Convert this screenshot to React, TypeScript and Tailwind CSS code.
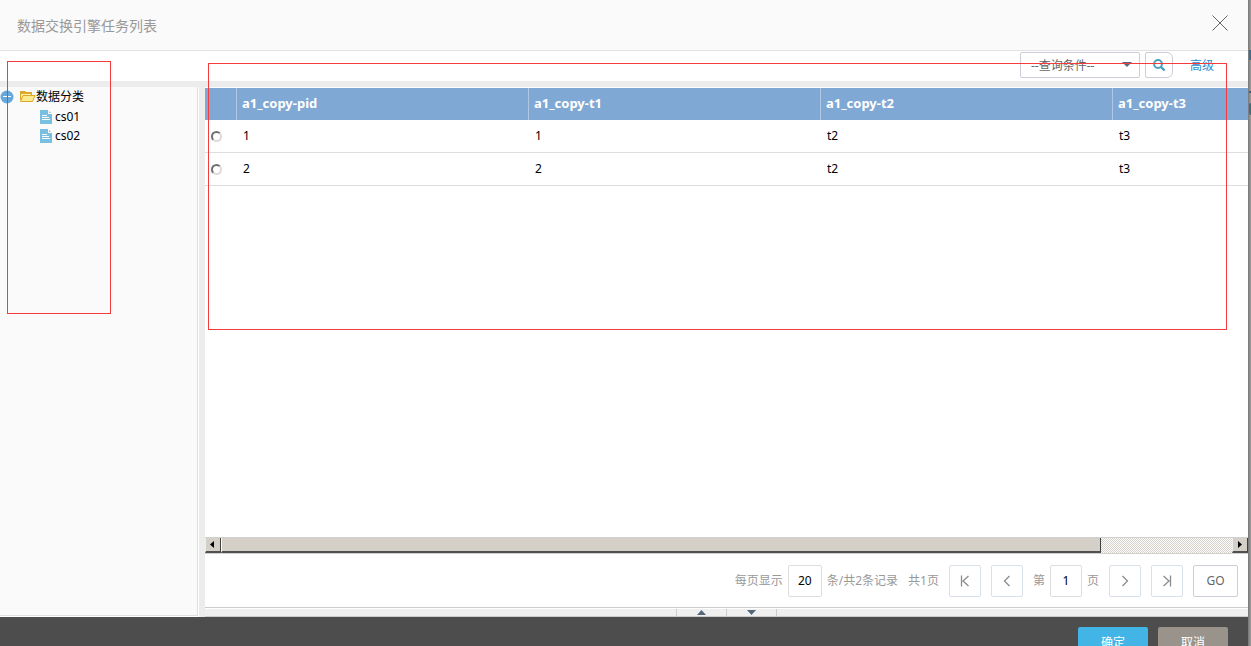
import { useState } from "react";
import type { ReactNode } from "react";

type Task = { pid: string; t1: string; t2: string; t3: string };

const columns: { key: keyof Task; label: string }[] = [
  { key: "pid", label: "a1_copy-pid" },
  { key: "t1", label: "a1_copy-t1" },
  { key: "t2", label: "a1_copy-t2" },
  { key: "t3", label: "a1_copy-t3" },
];

const tasks: Task[] = [
  { pid: "1", t1: "1", t2: "t2", t3: "t3" },
  { pid: "2", t1: "2", t2: "t2", t3: "t3" },
];

function FolderIcon() {
  return (
    <svg width="16" height="12" viewBox="0 0 16 12" className="shrink-0" aria-hidden="true">
      <path d="M0 0h5l1 1h6v3H3L1 9H0z" fill="#dba928" />
      <path d="M1 3h10v1H3L1 8z" fill="#fdf0b0" />
      <path d="M0.500 10.500L3 4.500h12L12.500 10.500z" fill="#fde98f" stroke="#dba928" />
    </svg>
  );
}

function FileIcon() {
  return (
    <svg width="12" height="14" viewBox="0 0 12 14" className="shrink-0" aria-hidden="true">
      <path d="M0 0h8v4h4v10H0z" fill="#78c0e0" />
      <path d="M9 1l2 2H9z" fill="#78c0e0" />
      <path d="M2 5.500h5M2 7.500h7M2 9.500h8" stroke="#fff" />
    </svg>
  );
}

function PageButton({ label, children }: { label: string; children: ReactNode }) {
  return (
    <button
      type="button"
      aria-label={label}
      className="w-8 h-8 flex items-center justify-center rounded-xs border border-[#d8e0ea] bg-white"
    >
      <svg width="12" height="12" viewBox="0 0 12 12" fill="none" stroke="#8c8c8c" strokeWidth="1.3" aria-hidden="true">
        {children}
      </svg>
    </button>
  );
}

export default function App() {
  const [selected, setSelected] = useState<string | null>(null);
  const [pageSize, setPageSize] = useState("20");
  const [page, setPage] = useState("1");

  return (
    <div className="relative flex h-screen overflow-hidden bg-[#999] text-xs text-black font-['Noto_Sans','Noto_Sans_CJK_SC',sans-serif]">
      {/* Dialog */}
      <div className="flex-1 min-w-0 flex flex-col bg-white">
        <header className="h-[51px] shrink-0 flex items-center justify-between pl-[17px] pr-5 border-b border-[#e2e2e2] bg-[#fafafa]">
          <h1 className="pt-[2px] text-sm text-[#999]">数据交换引擎任务列表</h1>
          <button type="button" aria-label="关闭" className="pb-1">
            <svg width="16" height="16" viewBox="0 0 16 16" stroke="#666" aria-hidden="true">
              <path d="M0.500 0.500l15 15M15.500 0.500l-15 15" />
            </svg>
          </button>
        </header>

        {/* Search bar */}
        <div className="h-[30px] shrink-0 flex items-center justify-end pr-[34px] pb-[2px]">
          <div className="relative w-[120px]">
            <select
              aria-label="查询条件"
              className="w-full h-[26px] appearance-none rounded-xs border border-[#ccced8] bg-white pl-[10px] pt-[2px] text-[#666]"
            >
              <option>--查询条件--</option>
            </select>
            <svg width="10" height="5" viewBox="0 0 10 5" className="absolute right-2 top-[10px] pointer-events-none" aria-hidden="true">
              <path d="M0 0h10L5 5z" fill="#53677d" />
            </svg>
          </div>
          <button
            type="button"
            aria-label="查询"
            className="ml-[5px] w-7 h-[26px] flex items-center justify-center rounded-r-md rounded-l-xs border border-[#ccced8] bg-white"
          >
            <svg width="12" height="12" viewBox="0 0 12 12" fill="none" stroke="#4a9fc4" strokeWidth="2" aria-hidden="true">
              <circle cx="5" cy="5" r="3.900" />
              <path d="M8 8l3.500 3.500" strokeWidth="2.400" />
            </svg>
          </button>
          <a href="#" className="ml-[17px] pt-[2px] text-[#2a8bd0]">高级</a>
        </div>

        <div className="h-[6px] shrink-0 bg-[#ececec]" />

        <div className="flex-1 min-h-0 flex">
          {/* Category tree */}
          <aside className="w-[198px] mb-px shrink-0 border-r border-b border-[#e0e0e0] bg-[#fafafa]">
            <div className="h-5 flex items-center">
              <button type="button" aria-label="收起" className="mr-[6px]">
                <svg width="14" height="14" viewBox="0 0 14 14" aria-hidden="true">
                  <circle cx="7" cy="7" r="6.500" fill="#66a8dc" />
                  <path d="M3 6.500h8" stroke="#fff" />
                </svg>
              </button>
              <FolderIcon />
              <span>数据分类</span>
            </div>
            <ul>
              {["cs01", "cs02"].map((name) => (
                <li key={name} className="h-[19px] flex items-center gap-[3px] pl-10">
                  <FileIcon />
                  {name}
                </li>
              ))}
            </ul>
          </aside>
          <div className="ml-px w-[6px] shrink-0 bg-[#ececec]" />

          <main className="flex-1 min-w-0 flex flex-col pt-px">
            <div className="flex-1 min-h-0 overflow-hidden">
              <table className="w-[1200px] table-fixed border-separate border-spacing-0 text-left">
                <thead>
                  <tr className="h-8 bg-[#80a8d4] text-[13px] text-white">
                    <th className="w-8 p-0 border-r border-[#b0c8e4]" aria-label="选择" />
                    {columns.map((c) => (
                      <th key={c.key} className="w-[292px] py-0 px-[5px] border-r border-[#b0c8e4] font-bold">
                        {c.label}
                      </th>
                    ))}
                  </tr>
                </thead>
                <tbody>
                  {tasks.map((task) => (
                    <tr key={task.pid} className="h-[33px]">
                      <td className="py-0 px-[6px] border-b border-[#ddd]">
                        <input
                          type="radio"
                          name="task"
                          aria-label={`任务 ${task.pid}`}
                          checked={selected === task.pid}
                          onChange={() => setSelected(task.pid)}
                          className="block size-[11px] appearance-none rounded-full border-2 border-t-[#707070] border-l-[#707070] border-r-[#dedbd4] border-b-[#dedbd4] bg-white checked:bg-black"
                        />
                      </td>
                      {columns.map((c) => (
                        <td key={c.key} className="py-0 px-[6px] border-b border-[#ddd]">
                          {task[c.key]}
                        </td>
                      ))}
                    </tr>
                  ))}
                </tbody>
              </table>
            </div>

            {/* Horizontal scroll bar */}
            <div className="h-[17px] shrink-0 flex border-y border-[#d0d0d0] bg-[repeating-conic-gradient(#d4d0c8_0_25%,#fff_0_50%)] bg-size-[2px_2px]">
              <button type="button" aria-label="向左滚动" className="w-4 flex items-center justify-center pr-[3px] bg-[#d4d0c8] border-r border-b-2 border-l border-l-[#eee] border-r-[#404040] border-b-[#505050]">
                <svg width="4" height="7" viewBox="0 0 4 7" aria-hidden="true"><path d="M4 0v7L0 3.500z" /></svg>
              </button>
              <div className="flex-1">
                <div className="w-[87%] h-full bg-[#d4d0c8] border-l border-r border-b-2 border-l-white border-r-[#404040] border-b-[#505050]" />
              </div>
              <button type="button" aria-label="向右滚动" className="w-4 flex items-center justify-center bg-[#d4d0c8] border-r border-b-2 border-l border-l-[#eee] border-r-[#404040] border-b-[#505050]">
                <svg width="4" height="7" viewBox="0 0 4 7" aria-hidden="true"><path d="M0 0v7L4 3.500z" /></svg>
              </button>
            </div>

            {/* Pagination */}
            <div className="h-[54px] shrink-0 flex items-center justify-end pr-[10px] border-b border-[#ccc] text-[#999]">
              <label htmlFor="page-size" className="mr-[5px]">每页显示</label>
              <input
                id="page-size"
                value={pageSize}
                onChange={(e) => setPageSize(e.target.value)}
                className="w-[34px] h-8 rounded-xs border border-[#ddd] text-center text-black"
              />
              <span className="ml-[5px]">条/共2条记录</span>
              <span className="mx-[10px]">共1页</span>
              <div className="flex gap-[10px]">
                <PageButton label="首页"><path d="M2.500 0.500v11M9.500 1L4 6l5.500 5" /></PageButton>
                <PageButton label="上一页"><path d="M8.500 1L3.500 6l5 5" /></PageButton>
              </div>
              <label htmlFor="page-no" className="ml-[10px] mr-[5px]">第</label>
              <input
                id="page-no"
                value={page}
                onChange={(e) => setPage(e.target.value)}
                className="w-8 h-8 rounded-xs border border-[#ddd] text-center text-black"
              />
              <span className="ml-[5px] mr-[10px]">页</span>
              <div className="flex gap-[10px]">
                <PageButton label="下一页"><path d="M3.500 1L8.500 6l-5 5" /></PageButton>
                <PageButton label="末页"><path d="M9.500 0.500v11M2.500 1L8 6l-5.500 5" /></PageButton>
                <button type="button" className="w-[45px] h-8 rounded-xs border border-[#ccced8] bg-white text-[#666]">
                  GO
                </button>
              </div>
            </div>

            {/* Panel toggles */}
            <div className="h-[9px] shrink-0 flex justify-center border-t border-t-white border-b border-b-[#ccc] bg-[#efefef]">
              <button type="button" aria-label="展开" className="w-[51px] flex items-center justify-center border-x border-[#ccc]">
                <svg width="9" height="5" viewBox="0 0 9 5" aria-hidden="true"><path d="M0 5h9L4.500 0z" fill="#53677d" /></svg>
              </button>
              <button type="button" aria-label="折叠" className="w-[50px] flex items-center justify-center border-r border-[#ccc]">
                <svg width="9" height="5" viewBox="0 0 9 5" aria-hidden="true"><path d="M0 0h9L4.500 5z" fill="#53677d" /></svg>
              </button>
            </div>
          </main>
        </div>

        <footer className="h-[29px] shrink-0 flex items-start justify-end gap-[10px] pt-[10px] pr-5 overflow-hidden bg-[#4d4d4d] text-white">
          <button type="button" className="w-[70px] h-8 shrink-0 rounded-xs bg-[#42b4e6]">确定</button>
          <button type="button" className="w-[70px] h-8 shrink-0 rounded-xs bg-[#99938b]">取消</button>
        </footer>
      </div>

      {/* Edge of the page behind the dialog */}
      <div className="w-[3px] shrink-0 bg-linear-to-r from-[#777] to-[#a0a0a0]">
        <div className="mt-[50px] ml-px h-[10px] bg-[#3b6f96]" />
        <div className="mt-[31px] ml-px h-[2px] bg-[#2f6089]" />
        <div className="mt-[10px] ml-px h-3 rounded-l-full bg-[#3a6f80]" />
      </div>

      {/* Highlighted regions */}
      <div className="absolute left-[7px] top-[61px] w-[104px] h-[253px] border border-[#f53b3b] pointer-events-none" />
      <div className="absolute left-[208px] right-6 top-[63px] h-[267px] border border-[#f53b3b] pointer-events-none" />
    </div>
  );
}
